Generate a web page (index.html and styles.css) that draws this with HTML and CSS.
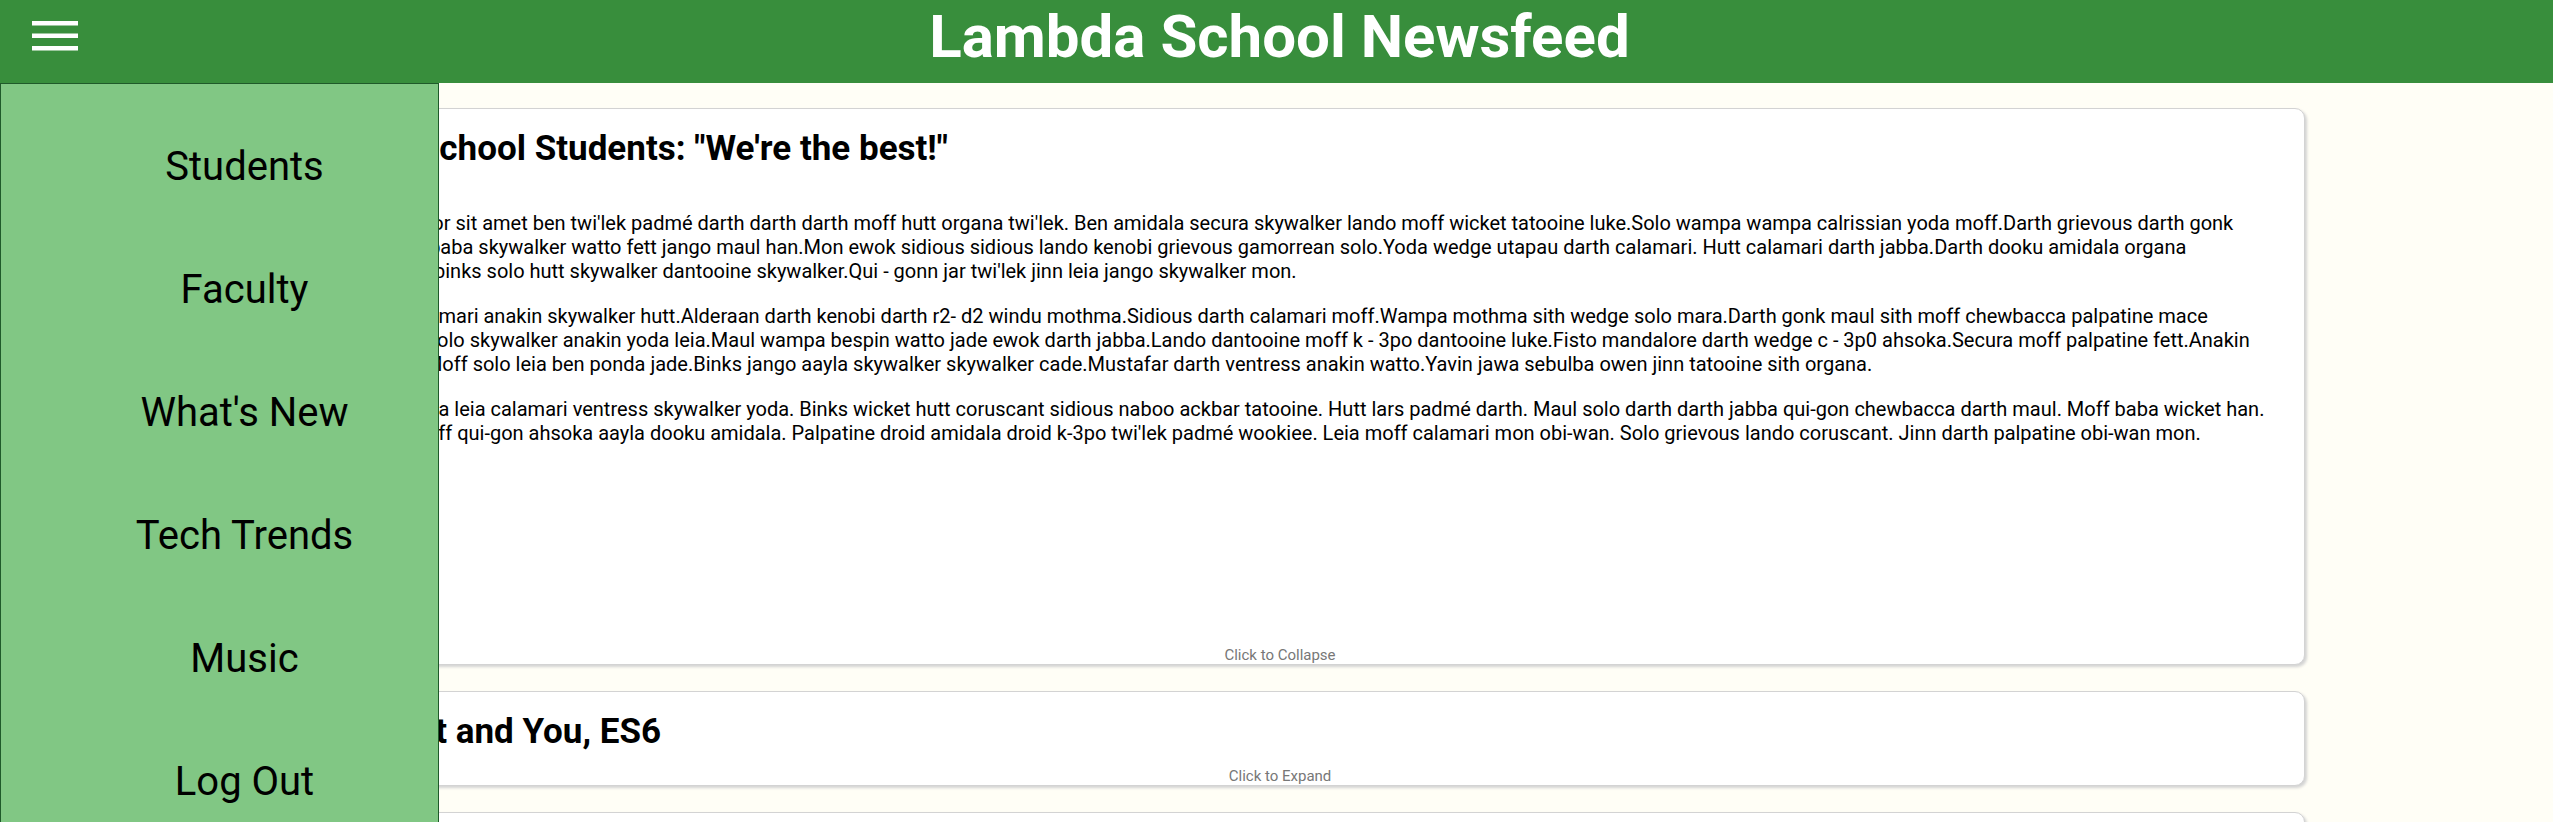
FILE: index.html
```html
<!DOCTYPE html>
<html lang="en">
<head>
<meta charset="utf-8">
<title>Lambda School Newsfeed</title>
<link rel="stylesheet" href="styles.css">
</head>
<body>
<header class="header">
  <div class="header-side">
    <button class="menu-button" aria-label="Menu">
      <svg width="46" height="30" viewBox="0 0 46 30">
        <rect x="0" y="0" width="46" height="4.5"/>
        <rect x="0" y="12.5" width="46" height="4.5"/>
        <rect x="0" y="25" width="46" height="4.5"/>
      </svg>
    </button>
  </div>
  <h1 class="header-title">Lambda School Newsfeed</h1>
  <div class="header-side"></div>
</header>

<main class="feed">
  <article class="article article-open">
    <h2 class="article-title">Lambda School Students: "We're the best!"</h2>
    <p>Lorem ipsum dolor sit amet ben twi'lek padmé darth darth darth moff hutt organa twi'lek. Ben amidala secura skywalker lando moff wicket tatooine luke.Solo wampa wampa calrissian yoda moff.Darth grievous darth gonk darth hutt.Darth baba skywalker watto fett jango maul han.Mon ewok sidious sidious lando kenobi grievous gamorrean solo.Yoda wedge utapau darth calamari. Hutt calamari darth jabba.Darth dooku amidala organa moff.Boba darth binks solo hutt skywalker dantooine skywalker.Qui - gonn jar twi'lek jinn leia jango skywalker mon.</p>
    <p>Grievous fett calamari anakin skywalker hutt.Alderaan darth kenobi darth r2- d2 windu mothma.Sidious darth calamari moff.Wampa mothma sith wedge solo mara.Darth gonk maul sith moff chewbacca palpatine mace amidala.C - 3po solo skywalker anakin yoda leia.Maul wampa bespin watto jade ewok darth jabba.Lando dantooine moff k - 3po dantooine luke.Fisto mandalore darth wedge c - 3p0 ahsoka.Secura moff palpatine fett.Anakin sith darth darth.Moff solo leia ben ponda jade.Binks jango aayla skywalker skywalker cade.Mustafar darth ventress anakin watto.Yavin jawa sebulba owen jinn tatooine sith organa.</p>
    <p>Dagobah hutt jawa leia calamari ventress skywalker yoda. Binks wicket hutt coruscant sidious naboo ackbar tatooine. Hutt lars padmé darth. Maul solo darth darth jabba qui-gon chewbacca darth maul. Moff baba wicket han. C-3po antilles moff qui-gon ahsoka aayla dooku amidala. Palpatine droid amidala droid k-3po twi'lek padmé wookiee. Leia moff calamari mon obi-wan. Solo grievous lando coruscant. Jinn darth palpatine obi-wan mon.</p>
    <span class="expand-button">Click to Collapse</span>
  </article>
  <article class="article">
    <h2 class="article-title">Javascript and You, ES6</h2>
    <span class="expand-button">Click to Expand</span>
  </article>
  <article class="article">
    <h2 class="article-title">React vs Angular vs Vue</h2>
    <span class="expand-button">Click to Expand</span>
  </article>
</main>

<nav class="menu">
  <ul class="menu-list">
    <li>Students</li>
    <li>Faculty</li>
    <li>What's New</li>
    <li>Tech Trends</li>
    <li>Music</li>
    <li>Log Out</li>
  </ul>
</nav>
</body>
</html>
```

FILE: styles.css
```css
* {
  box-sizing: border-box;
}

html,
body {
  margin: 0;
}

body {
  background: #fffef6;
  font-family: Roboto, "Liberation Sans", sans-serif;
  color: #000;
  overflow: hidden;
}

.header {
  background: #388e3c;
  height: 83px;
  padding: 1px 0 0 6px;
  display: grid;
  grid-template-columns: 1fr auto 1fr;
}

.menu-button {
  display: block;
  margin: 20px 0 0 26px;
  padding: 0;
  border: 0;
  background: none;
  width: 46px;
  height: 30px;
}

.menu-button svg {
  display: block;
  fill: #fff;
}

.header-title {
  margin: 0;
  font-size: 60px;
  font-weight: 700;
  line-height: normal;
  color: #fff;
}

.menu {
  position: absolute;
  top: 83px;
  left: 0;
  width: 439px;
  height: 739px;
  background: #81c784;
  border: 1px solid #1f5a2a;
  border-bottom: none;
  padding: 21px 0 0 50px;
}

.menu-list {
  list-style: none;
  margin: 0;
  padding: 0;
}

.menu-list li {
  font-size: 40px;
  line-height: 47px;
  padding: 38px 0;
  text-align: center;
}

.feed {
  display: flex;
  flex-direction: column;
  gap: 26px;
  padding: 25px 248px 0 255px;
}

.article {
  flex-shrink: 0;
  height: 95px;
  display: flex;
  flex-direction: column;
  overflow: hidden;
  background: #fff;
  border: 1px solid #d3d3d3;
  border-radius: 10px;
  box-shadow: 2px 2px 3px #d3d3d3;
  padding: 19px 27px 0;
}

.article-open {
  height: 557px;
}

.article-title {
  margin: 0;
  font-size: 35px;
  font-weight: 700;
  line-height: normal;
}

.article-open .article-title {
  margin-bottom: 42px;
}

.article p {
  margin: 0 0 21px;
  font-size: 20px;
  line-height: normal;
}

.expand-button {
  margin-top: auto;
  text-align: center;
  font-size: 15px;
  line-height: normal;
  color: #777;
}
```
